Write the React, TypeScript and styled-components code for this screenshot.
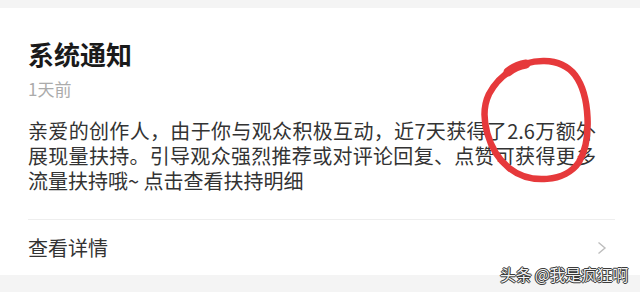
import React from "react";
import styled, { createGlobalStyle } from "styled-components";

const GlobalStyle = createGlobalStyle`
  html, body {
    margin: 0;
    padding: 0;
    background: #f4f4f4;
  }
  body {
    font-family: "Noto Sans CJK SC", "Noto Sans", sans-serif;
  }
`;

const Page = styled.div`
  position: relative;
  width: 640px;
  height: 292px;
  overflow: hidden;
  background: #f4f4f4;
  padding-top: 8px;
  box-sizing: border-box;
`;

const Card = styled.section`
  background: #ffffff;
  height: 267px;
  padding: 31px 25px 0 28px;
  box-sizing: border-box;
  display: flex;
  flex-direction: column;
`;

const Title = styled.h2`
  margin: 0;
  font-size: 26px;
  line-height: 30px;
  font-weight: 700;
  color: #1a1a1a;
`;

const Time = styled.div`
  margin-top: 8px;
  font-size: 17px;
  line-height: 24px;
  color: #ababab;
`;

const Body = styled.p`
  margin: 17px 19px 0 0;
  font-size: 20px;
  line-height: 25px;
  color: #333333;
  text-align: justify;
`;

const Divider = styled.hr`
  margin: 26px 0 0 0;
  border: none;
  height: 1px;
  background: #eeeeee;
`;

const DetailRow = styled.div`
  flex: 1;
  display: flex;
  align-items: center;
  justify-content: space-between;
  padding-right: 8px;
`;

const DetailText = styled.span`
  font-size: 20px;
  line-height: 24px;
  color: #333333;
`;

const Watermark = styled.div`
  position: absolute;
  right: 12px;
  bottom: 8px;
  font-size: 16px;
  line-height: 20px;
  color: #f2f2f2;
  letter-spacing: -0.3px;
  text-shadow: 0 0 1px #222, 0 0 1px #222, 1px 0 0 #444, -1px 0 0 #444,
    0 1px 0 #444, 0 -1px 0 #444;
`;

const Annotation = styled.svg`
  position: absolute;
  left: 0;
  top: 0;
  pointer-events: none;
`;

const Chevron = () => (
  <svg width="10" height="14" viewBox="0 0 10 14">
    <path d="M1.5 1.5 L8 7 L1.5 12.5" fill="none" stroke="#bdbdbd" strokeWidth="1.4" />
  </svg>
);

export default function App() {
  return (
    <>
      <GlobalStyle />
      <Page>
        <Card>
          <Title>系统通知</Title>
          <Time>1天前</Time>
          <Body>
            亲爱的创作人，由于你与观众积极互动，近7天获得了2.6万额外展现量扶持。引导观众强烈推荐或对评论回复、点赞可获得更多流量扶持哦~ 点击查看扶持明细
          </Body>
          <Divider />
          <DetailRow>
            <DetailText>查看详情</DetailText>
            <Chevron />
          </DetailRow>
        </Card>
        <Watermark>头条 @我是疯狂啊</Watermark>
        <Annotation width="640" height="292" viewBox="0 0 640 292">
          <path
            d="M510 71 C530 58, 560 56, 575 75 C590 95, 592 140, 579 162 C566 182, 530 185, 509 168 C489 152, 478 117, 489 94 C496 81, 503 75, 512 70"
            fill="none"
            stroke="#e6393b"
            strokeWidth="6.5"
            strokeLinecap="round"
          />
          <path d="M508 72 C514 67, 520 65, 526 64" fill="none" stroke="#e6393b" strokeWidth="9" strokeLinecap="round" />
        </Annotation>
      </Page>
    </>
  );
}
